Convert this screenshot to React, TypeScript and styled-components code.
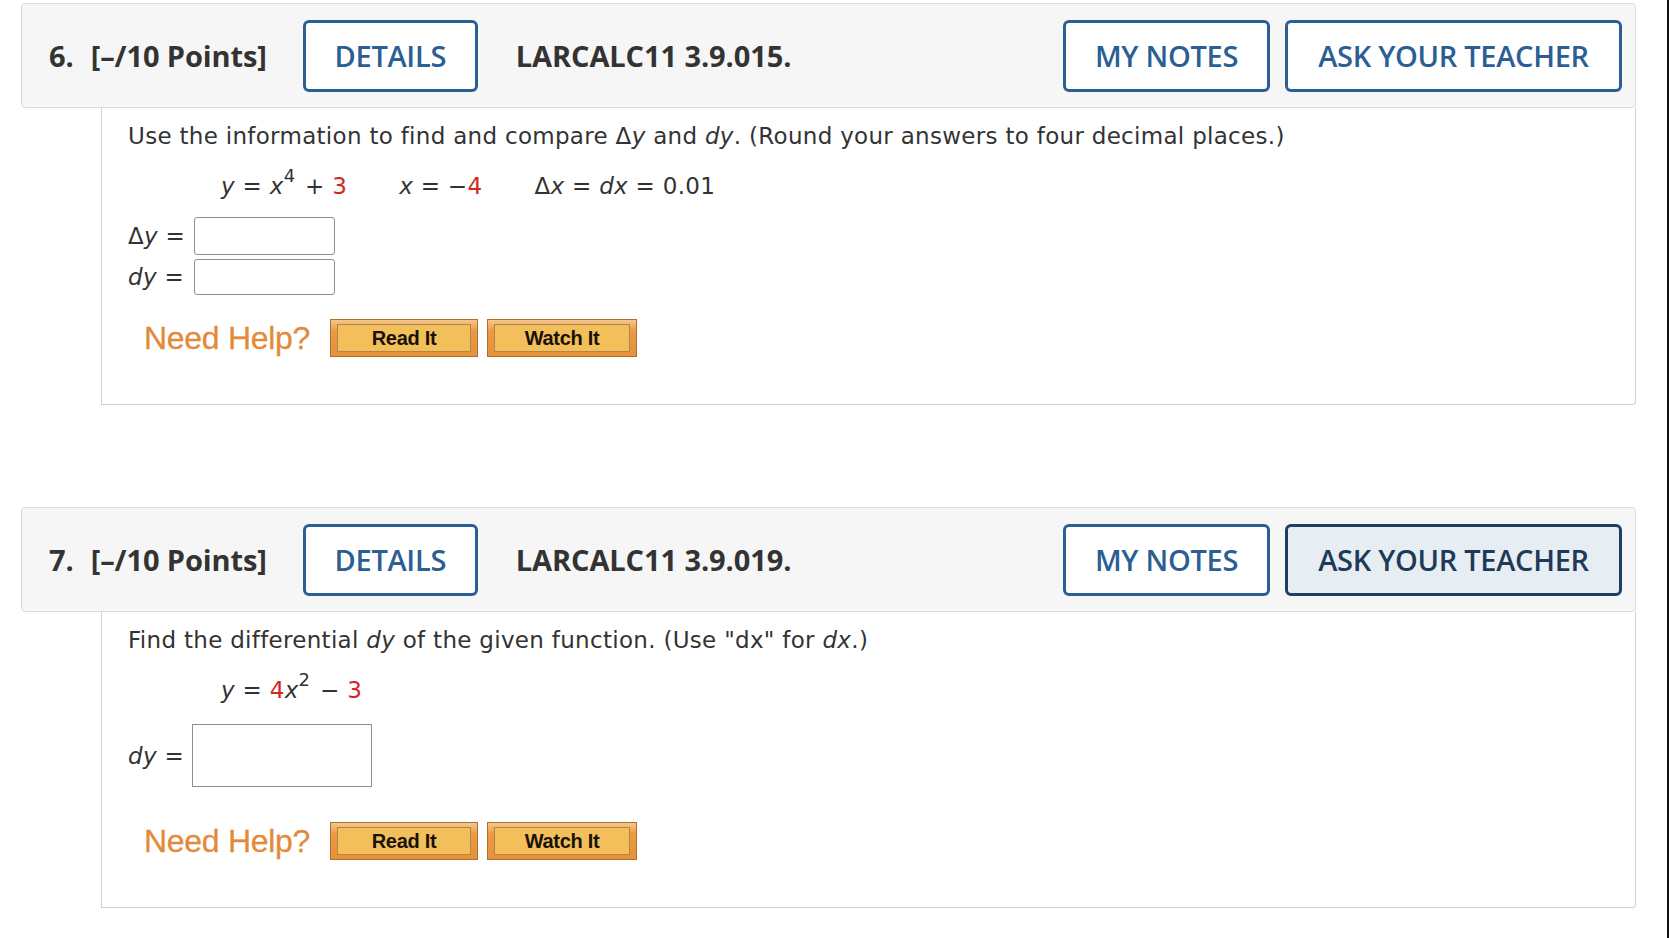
import React from "react";
import styled, { createGlobalStyle } from "styled-components";

const Global = createGlobalStyle`
  html, body { margin: 0; padding: 0; background: #fff; }
  body { font-family: "DejaVu Sans", Verdana, sans-serif; color: #333; }
  * { box-sizing: border-box; }
`;

const Page = styled.div`
  width: 1669px;
  min-height: 938px;
  padding: 3px 31px 0 21px;
  border-right: 2px solid #111;
`;

const Question = styled.section<{ $gap: number }>`
  margin-bottom: ${(p) => p.$gap}px;
`;

const Header = styled.div`
  height: 105px;
  display: flex;
  align-items: center;
  padding: 0 13px 0 27px;
  background: #f6f6f6;
  border: 1px solid #dcdcdc;
  border-radius: 4px;
  font-family: "Open Sans", sans-serif;
`;

const Points = styled.div`
  font-weight: 700;
  font-size: 29px;
  color: #333;
  letter-spacing: -0.1px;
  white-space: nowrap;
  & span { margin-right: 17px; }
`;

const OutlineButton = styled.button<{ $active?: boolean; $w: number }>`
  width: ${(p) => p.$w}px;
  height: 72px;
  border: 3px solid ${(p) => (p.$active ? "#1e3f63" : "#2b5f94")};
  border-radius: 6px;
  background: ${(p) => (p.$active ? "#e7eef3" : "#fff")};
  color: ${(p) => (p.$active ? "#1f3a58" : "#2b5f94")};
  font-family: "Open Sans", sans-serif;
  font-weight: 600;
  font-size: 29px;
  letter-spacing: -0.3px;
  padding: 0;
  cursor: pointer;
`;

const DetailsWrap = styled.div`
  margin-left: 36px;
`;

const Code = styled.div`
  margin-left: 38px;
  font-weight: 700;
  font-size: 29px;
  color: #333;
  letter-spacing: -0.1px;
`;

const Spacer = styled.div`
  flex: 1;
`;

const RightButtons = styled.div`
  display: flex;
  gap: 15px;
`;

const Body = styled.div<{ $h: number }>`
  margin-left: 80px;
  height: ${(p) => p.$h}px;
  border: 1px solid #cfcfcf;
  border-top: none;
  border-bottom-right-radius: 4px;
  padding: 14px 0 0 26px;
  font-size: 23px;
  letter-spacing: 0.3px;
  color: #333;
`;

const Prompt = styled.div`
  line-height: 28px;
  white-space: nowrap;
`;

const Eq = styled.div<{ $mt: number }>`
  margin: ${(p) => p.$mt}px 0 0 93px;
  line-height: 28px;
  white-space: nowrap;
  display: flex;
  gap: 52px;
`;

const I = styled.i`
  font-style: italic;
`;

const Red = styled.span`
  color: #d0281f;
`;

const Sup = styled.sup`
  font-size: 18px;
  position: relative;
  top: -3px;
  vertical-align: super;
  line-height: 0;
  margin-right: 2px;
`;

const Answers = styled.div<{ $mt: number }>`
  margin-top: ${(p) => p.$mt}px;
  display: flex;
  flex-direction: column;
  gap: 4px;
`;

const AnswerRow = styled.div`
  display: flex;
  align-items: center;
`;

const Label = styled.span<{ $w: number }>`
  display: inline-block;
  width: ${(p) => p.$w}px;
  white-space: nowrap;
`;

const Field = styled.div<{ $w: number; $h: number; $r: number }>`
  width: ${(p) => p.$w}px;
  height: ${(p) => p.$h}px;
  border: 1px solid #8f8f8f;
  border-radius: ${(p) => p.$r}px;
  background: #fff;
`;

const HelpRow = styled.div<{ $mt: number }>`
  margin: ${(p) => p.$mt}px 0 0 16px;
  display: flex;
  align-items: center;
  letter-spacing: 0;
`;

const NeedHelp = styled.span`
  font-family: "Liberation Sans", Arial, sans-serif;
  font-size: 32px;
  color: #e38a3a;
  margin-right: 20px;
  letter-spacing: -0.3px;
  -webkit-text-stroke: 0.3px #e38a3a;
`;

const HelpButton = styled.button<{ $w: number }>`
  width: ${(p) => p.$w}px;
  height: 38px;
  margin-right: 9px;
  padding: 4px 6px;
  border: 1px solid #a9732f;
  background: linear-gradient(#f6c78e 0%, #eb9a43 30%, #e8913a 100%);
  display: flex;
  cursor: pointer;
`;

const HelpInner = styled.span`
  flex: 1;
  display: flex;
  align-items: center;
  justify-content: center;
  border: 1px solid #b08548;
  background: #f2bf5a;
  font-family: "Liberation Sans", Arial, sans-serif;
  font-weight: 700;
  font-size: 20px;
  letter-spacing: -0.3px;
  color: #1a1208;
`;

const Help = ({ mt }: { mt: number }) => (
  <HelpRow $mt={mt}>
    <NeedHelp>Need Help?</NeedHelp>
    <HelpButton $w={148}>
      <HelpInner>Read It</HelpInner>
    </HelpButton>
    <HelpButton $w={150}>
      <HelpInner>Watch It</HelpInner>
    </HelpButton>
  </HelpRow>
);

const QHeader = ({ n, code, active }: { n: number; code: string; active?: boolean }) => (
  <Header>
    <Points>
      <span>{n}.</span>[–/10 Points]
    </Points>
    <DetailsWrap>
      <OutlineButton $w={175}>DETAILS</OutlineButton>
    </DetailsWrap>
    <Code>{code}</Code>
    <Spacer />
    <RightButtons>
      <OutlineButton $w={207}>MY NOTES</OutlineButton>
      <OutlineButton $w={337} $active={active}>
        ASK YOUR TEACHER
      </OutlineButton>
    </RightButtons>
  </Header>
);

export default function App() {
  return (
    <>
      <Global />
      <Page>
        <Question $gap={102}>
          <QHeader n={6} code="LARCALC11 3.9.015." />
          <Body $h={297}>
            <Prompt>
              Use the information to find and compare Δ<I>y</I> and <I>dy</I>. (Round your
              answers to four decimal places.)
            </Prompt>
            <Eq $mt={22}>
              <span>
                <I>y</I> = <I>x</I>
                <Sup>4</Sup> + <Red>3</Red>
              </span>
              <span>
                <I>x</I> = −<Red>4</Red>
              </span>
              <span>
                Δ<I>x</I> = <I>dx</I> = 0.01
              </span>
            </Eq>
            <Answers $mt={17}>
              <AnswerRow>
                <Label $w={66}>
                  Δ<I>y</I> =
                </Label>
                <Field $w={141} $h={38} $r={3} />
              </AnswerRow>
              <AnswerRow>
                <Label $w={66}>
                  <I>dy</I> =
                </Label>
                <Field $w={141} $h={36} $r={3} />
              </AnswerRow>
            </Answers>
            <Help mt={24} />
          </Body>
        </Question>
        <Question $gap={0}>
          <QHeader n={7} code="LARCALC11 3.9.019." active />
          <Body $h={296}>
            <Prompt>
              Find the differential <I>dy</I> of the given function. (Use "dx" for <I>dx</I>.)
            </Prompt>
            <Eq $mt={22}>
              <span>
                <I>y</I> = <Red>4</Red>
                <I>x</I>
                <Sup>2</Sup> − <Red>3</Red>
              </span>
            </Eq>
            <Answers $mt={20}>
              <AnswerRow>
                <Label $w={64}>
                  <I>dy</I> =
                </Label>
                <Field $w={180} $h={63} $r={0} />
              </AnswerRow>
            </Answers>
            <Help mt={35} />
          </Body>
        </Question>
      </Page>
    </>
  );
}
